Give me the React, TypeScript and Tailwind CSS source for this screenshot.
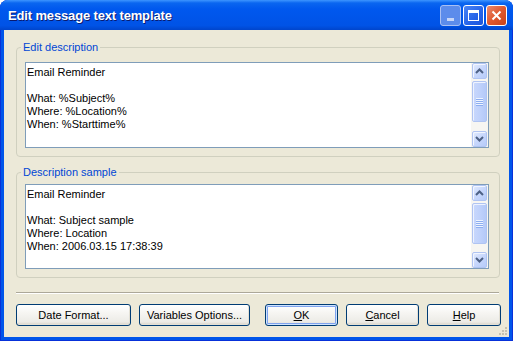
import React from "react";

function Chevron({ dir }: { dir: "up" | "down" }) {
  return (
    <svg width="9" height="6" viewBox="0 0 9 6">
      {dir === "up" ? (
        <path d="M1 5 L4.5 1.5 L8 5" stroke="#4D6185" strokeWidth="2" fill="none" />
      ) : (
        <path d="M1 1 L4.5 4.5 L8 1" stroke="#4D6185" strokeWidth="2" fill="none" />
      )}
    </svg>
  );
}

function ScrollBtn({ dir }: { dir: "up" | "down" }) {
  return (
    <div className="h-[16px] w-[15px] flex items-center justify-center rounded-[2px] border border-[#B0C4F2] bg-[linear-gradient(135deg,#E2EBFE_0%,#C7D7FC_50%,#B6CBF9_100%)] shadow-[inset_1px_1px_0_#F2F6FF]">
      <Chevron dir={dir} />
    </div>
  );
}

function ScrollBar() {
  return (
    <div className="w-[17px] h-full flex flex-col items-center bg-[#F7F6F2]">
      <ScrollBtn dir="up" />
      <div className="mt-[2px] h-[41px] w-[15px] flex flex-col items-center justify-center rounded-[2px] border border-[#B0C4F2] bg-[linear-gradient(90deg,#C9D8FC_0%,#BDD0FB_60%,#B4C9F8_100%)] shadow-[inset_1px_1px_0_#EEF3FF]">
        <div className="w-[7px] h-[1px] bg-[#EEF4FF]" />
        <div className="w-[7px] h-[1px] bg-[#8DAEF0]" />
        <div className="w-[7px] h-[1px] bg-[#EEF4FF]" />
        <div className="w-[7px] h-[1px] bg-[#8DAEF0]" />
        <div className="w-[7px] h-[1px] bg-[#EEF4FF]" />
        <div className="w-[7px] h-[1px] bg-[#8DAEF0]" />
        <div className="w-[7px] h-[1px] bg-[#EEF4FF]" />
        <div className="w-[7px] h-[1px] bg-[#8DAEF0]" />
      </div>
      <div className="flex-1" />
      <ScrollBtn dir="down" />
    </div>
  );
}

function TextBox({ lines, h }: { lines: string[]; h: string }) {
  return (
    <div className={`flex border border-[#7F9DB9] bg-white ${h}`}>
      <div className="flex-1 pl-[1px] pt-[3px] text-[11px] leading-[13px] text-black">
        {lines.map((l, i) => (
          <div key={i} className="h-[13px] whitespace-pre">
            {l}
          </div>
        ))}
      </div>
      <ScrollBar />
    </div>
  );
}

function Btn({
  children,
  w,
  def,
}: {
  children: React.ReactNode;
  w: string;
  def?: boolean;
}) {
  return (
    <div
      className={`${w} h-[22px] flex items-center justify-center rounded-[3px] border border-[#003C74] text-[11px] text-black bg-[linear-gradient(180deg,#FFFFFF_0%,#F6F5F2_40%,#ECEBE6_85%,#D6D0C5_100%)] ${
        def
          ? "shadow-[inset_0_0_0_1px_#CEE3FF,inset_0_0_0_2px_#7FA3EE]"
          : "shadow-[inset_-1px_-1px_0_#E3E0D5]"
      }`}
    >
      {children}
    </div>
  );
}

export default function App() {
  return (
    <div className="w-[513px] h-[341px] flex flex-col rounded-t-[8px] overflow-hidden bg-[#0055EA] font-['Liberation_Sans',Arial,sans-serif] shadow-[inset_1px_0_0_#0831D9,inset_-1px_0_0_#0831D9,inset_0_-1px_0_#0831D9]">
      {/* Title bar */}
      <div className="h-[30px] shrink-0 flex items-center pl-[8px] pr-[6px] bg-[linear-gradient(180deg,#3D95FF_0%,#0A66F0_10%,#0058EE_30%,#0055EA_60%,#0053E6_85%,#0045CC_100%)]">
        <span className="text-white font-bold text-[13px] tracking-[-0.15px] [text-shadow:1px_1px_0_#0A1A6E] mt-[1px]">
          Edit message text template
        </span>
        <div className="ml-auto flex gap-[2px] mt-[1px]">
          <div className="w-[21px] h-[21px] rounded-[3px] border border-[#A9C0F3] bg-[#5C8CEB] flex items-end justify-center pb-[4px]">
            <div className="w-[7px] h-[3px] bg-[#C6D6F8]" />
          </div>
          <div className="w-[21px] h-[21px] rounded-[3px] border border-white bg-[linear-gradient(135deg,#4A85F5_0%,#2663E8_60%,#1E56DA_100%)] flex items-center justify-center">
            <div className="w-[11px] h-[11px] border border-white border-t-[3px]" />
          </div>
          <div className="w-[21px] h-[21px] rounded-[3px] border border-white bg-[linear-gradient(135deg,#E98A6E_0%,#E0582F_50%,#C9431C_100%)] flex items-center justify-center">
            <svg width="11" height="11" viewBox="0 0 11 11">
              <path d="M1.5 1.5 L9.5 9.5 M9.5 1.5 L1.5 9.5" stroke="white" strokeWidth="2" />
            </svg>
          </div>
        </div>
      </div>

      {/* Client area */}
      <div className="flex-1 mx-[4px] mb-[4px] bg-[#ECE9D8] flex flex-col relative">
        <fieldset className="mt-[11px] ml-[12px] mr-[9px] border border-[#D0D0BF] rounded-[4px] pl-[8px] pr-[10px] pt-[8px] pb-[8px]">
          <legend className="-ml-[4px] px-[2px] text-[#0046D5] leading-[13px] text-[11px]">
            Edit description
          </legend>
          <TextBox
            h="h-[86px]"
            lines={["Email Reminder", "", "What: %Subject%", "Where: %Location%", "When: %Starttime%"]}
          />
        </fieldset>

        <fieldset className="mt-[9px] ml-[12px] mr-[9px] border border-[#D0D0BF] rounded-[4px] pl-[8px] pr-[10px] pt-[5px] pb-[8px]">
          <legend className="-ml-[4px] px-[2px] text-[#0046D5] leading-[13px] text-[11px]">
            Description sample
          </legend>
          <TextBox
            h="h-[85px]"
            lines={["Email Reminder", "", "What: Subject sample", "Where: Location", "When: 2006.03.15 17:38:39"]}
          />
        </fieldset>

        <div className="mt-[14px] ml-[12px] mr-[10px] h-[2px] border-t border-[#ACA899] border-b border-b-white" />

        <div className="mt-[10px] ml-[12px] flex">
          <Btn w="w-[115px]">Date Format...</Btn>
          <div className="ml-[8px]">
            <Btn w="w-[111px]">Variables Options...</Btn>
          </div>
          <div className="ml-[15px]">
            <Btn w="w-[73px]" def>
              <span className="underline">O</span>K
            </Btn>
          </div>
          <div className="ml-[8px]">
            <Btn w="w-[73px]">
              <span className="underline">C</span>ancel
            </Btn>
          </div>
          <div className="ml-[8px]">
            <Btn w="w-[74px]">
              <span className="underline">H</span>elp
            </Btn>
          </div>
        </div>

        <svg className="absolute right-[1px] bottom-[1px]" width="11" height="11" viewBox="0 0 11 11">
          <rect x="8" y="2" width="2" height="2" fill="#C5C2B2" />
          <rect x="5" y="5" width="2" height="2" fill="#C5C2B2" />
          <rect x="8" y="5" width="2" height="2" fill="#C5C2B2" />
          <rect x="2" y="8" width="2" height="2" fill="#C5C2B2" />
          <rect x="5" y="8" width="2" height="2" fill="#C5C2B2" />
          <rect x="8" y="8" width="2" height="2" fill="#C5C2B2" />
        </svg>
      </div>
    </div>
  );
}
